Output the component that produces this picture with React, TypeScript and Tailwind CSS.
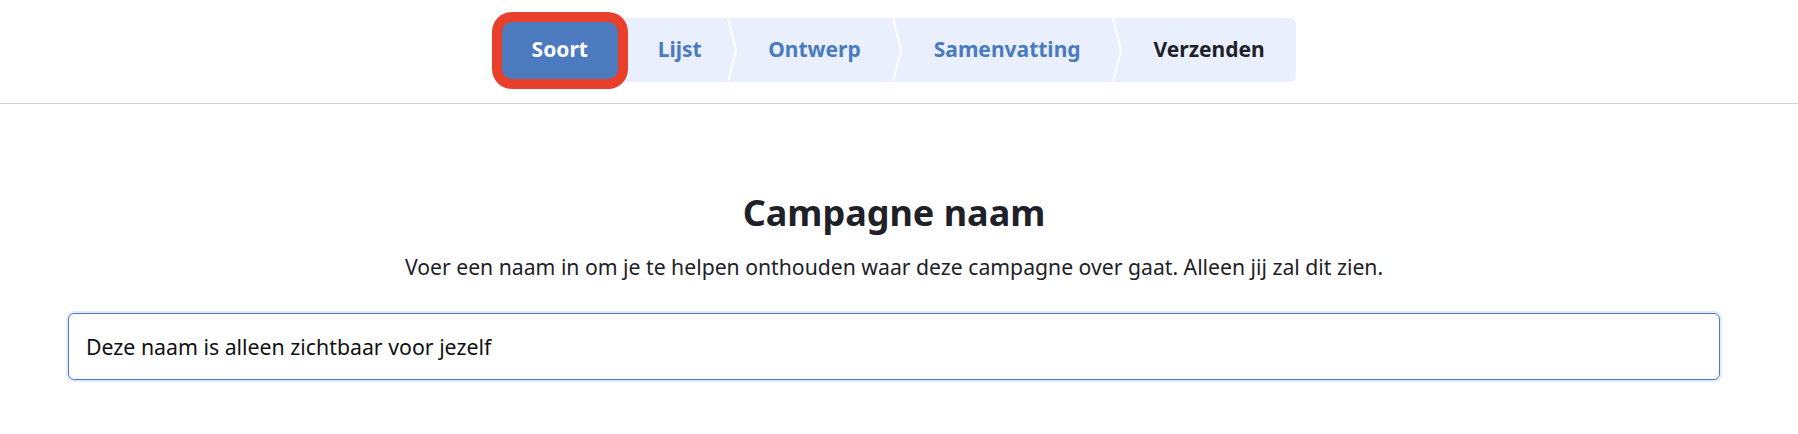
import { Fragment } from 'react';

const steps = [
  { label: 'Lijst', tone: 'text-[#4a7bbf]', pad: 'pl-[40px] pr-[25px]' },
  { label: 'Ontwerp', tone: 'text-[#4a7bbf]', pad: 'px-[31.5px]' },
  { label: 'Samenvatting', tone: 'text-[#4a7bbf]', pad: 'px-[31.5px]' },
  { label: 'Verzenden', tone: 'text-[#1f2128]', pad: 'px-[31.5px]' },
];

function Chevron() {
  return (
    <svg width="10" height="64" viewBox="0 0 10 64" className="shrink-0" aria-hidden="true">
      <polyline points="1,0 9,32 1,64" fill="none" stroke="#ffffff" strokeWidth="2" />
    </svg>
  );
}

function Stepper() {
  return (
    <nav className="flex h-[64px] items-center rounded-[6px] bg-[#e9effc]">
      {/* Active step */}
      <div className="flex h-[57px] w-[116px] items-center justify-center rounded-[10px] bg-[#4b7bbe] text-[21px] font-bold text-white ring-[10px] ring-[#e8402a]">
        Soort
      </div>
      {steps.map((step, i) => (
        <Fragment key={step.label}>
          {i > 0 && <Chevron />}
          <div className={`flex h-full items-center text-[21px] font-bold ${step.pad} ${step.tone}`}>
            {step.label}
          </div>
        </Fragment>
      ))}
    </nav>
  );
}

export default function App() {
  return (
    <div className="min-h-screen bg-white font-['Noto_Sans','Roboto',sans-serif] text-[#1f2128]">
      <header className="flex h-[104px] justify-center border-b border-[#d3d3dc] pt-[18px]">
        <Stepper />
      </header>

      <main className="flex flex-col items-center pl-[68px] pr-[78px] pt-[86px]">
        <h1 className="text-[36px] font-bold leading-[46px] text-[#1f2128]">Campagne naam</h1>
        <p className="mt-[17px] text-[21.2px] leading-[28px] text-[#1f2128]">
          Voer een naam in om je te helpen onthouden waar deze campagne over gaat. Alleen jij zal dit zien.
        </p>
        <input
          type="text"
          defaultValue="Deze naam is alleen zichtbaar voor jezelf"
          className="mt-[32px] h-[67px] w-full rounded-[6px] border border-[#4a7bc8] px-[17px] text-[21.3px] text-[#111111] shadow-[0_0_0_2px_#e3ebfa] outline-none"
        />
      </main>
    </div>
  );
}
